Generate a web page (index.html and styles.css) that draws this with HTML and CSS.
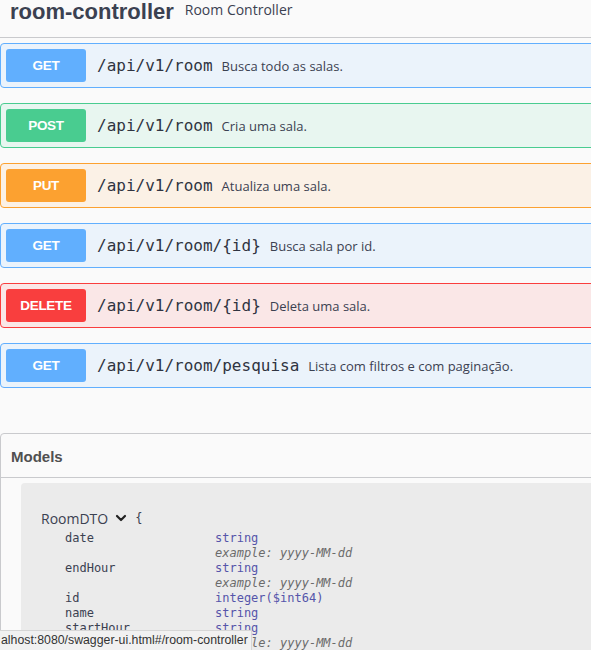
FILE: index.html
```html
<!DOCTYPE html>
<html>
<head>
<meta charset="utf-8">
<link rel="stylesheet" href="styles.css">
</head>
<body>
<div class="wrap">
  <div class="tag-header">
    <h3 class="tag-name">room-controller</h3>
    <span class="tag-desc">Room Controller</span>
  </div>

  <div class="ops">
    <div class="op get"><span class="method">GET</span><span class="path">/api/v1/room</span><span class="summary">Busca todo as salas.</span></div>
    <div class="op post"><span class="method">POST</span><span class="path">/api/v1/room</span><span class="summary">Cria uma sala.</span></div>
    <div class="op put"><span class="method">PUT</span><span class="path">/api/v1/room</span><span class="summary">Atualiza uma sala.</span></div>
    <div class="op get"><span class="method">GET</span><span class="path">/api/v1/room/{id}</span><span class="summary">Busca sala por id.</span></div>
    <div class="op delete"><span class="method">DELETE</span><span class="path">/api/v1/room/{id}</span><span class="summary">Deleta uma sala.</span></div>
    <div class="op get"><span class="method">GET</span><span class="path">/api/v1/room/pesquisa</span><span class="summary">Lista com filtros e com paginação.</span></div>
  </div>

  <section class="models">
    <h4 class="models-title">Models</h4>
    <div class="model-box">
      <div class="model-head">
        <span class="model-name">RoomDTO</span>
        <svg class="chev" width="12" height="12" viewBox="0 0 12 12"><polyline points="2,4 6,8 10,4" fill="none" stroke="#222" stroke-width="2.2" stroke-linecap="round" stroke-linejoin="round"/></svg>
        <span class="brace">{</span>
      </div>
      <div class="props">
        <span class="pname">date</span><span class="ptype">string</span>
        <span></span><span class="pex">example: yyyy-MM-dd</span>
        <span class="pname">endHour</span><span class="ptype">string</span>
        <span></span><span class="pex">example: yyyy-MM-dd</span>
        <span class="pname">id</span><span class="ptype">integer($int64)</span>
        <span class="pname">name</span><span class="ptype">string</span>
        <span class="pname">startHour</span><span class="ptype">string</span>
        <span></span><span class="pex">example: yyyy-MM-dd</span>
      </div>
    </div>
  </section>
</div>
<div class="statusbar">alhost:8080/swagger-ui.html#/room-controller</div>
</body>
</html>
```

FILE: styles.css
```css
html, body {
  margin: 0;
  padding: 0;
}
body {
  background: #fafafa;
  width: 591px;
  height: 650px;
  overflow: hidden;
  color: #3b4151;
  font-family: "Open Sans", sans-serif;
}
.wrap {
  width: 640px;
}
.tag-header {
  height: 37px;
  border-bottom: 1px solid #c9cacd;
  display: flex;
  align-items: flex-start;
  padding-left: 10px;
}
.tag-name {
  margin: 0;
  font-family: "Liberation Sans", Arial, sans-serif;
  font-weight: bold;
  font-size: 22px;
  line-height: 24px;
  color: #3b4151;
}
.tag-desc {
  margin-left: 11px;
  font-size: 14px;
  line-height: 20px;
  color: #3b4151;
}
.ops {
  padding-top: 5px;
  display: flex;
  flex-direction: column;
  gap: 15px;
}
.op {
  height: 45px;
  box-sizing: border-box;
  border: 1px solid;
  border-radius: 4px;
  padding: 5px;
  display: flex;
  align-items: center;
}
.method {
  width: 80px;
  height: 33px;
  flex: none;
  border-radius: 3px;
  color: #fff;
  font-family: "Liberation Sans", Arial, sans-serif;
  font-weight: bold;
  font-size: 13.5px;
  letter-spacing: -0.3px;
  display: flex;
  align-items: center;
  justify-content: center;
}
.path {
  margin-left: 11px;
  font-family: "DejaVu Sans Mono", monospace;
  font-size: 16px;
  color: #2f3441;
}
.summary {
  margin-left: 9px;
  font-size: 13px;
  color: #3b4151;
}
.get { background: #ebf3fb; border-color: #61affe; }
.get .method { background: #61affe; }
.post { background: #e8f6f0; border-color: #49cc90; }
.post .method { background: #49cc90; }
.put { background: #fbf1e6; border-color: #fca130; }
.put .method { background: #fca130; }
.delete { background: #fae7e7; border-color: #f93e3e; }
.delete .method { background: #f93e3e; }

.models {
  margin-top: 45px;
  border: 1px solid #c9cacd;
  border-radius: 4px;
}
.models-title {
  margin: 0;
  height: 44px;
  box-sizing: border-box;
  border-bottom: 1px solid #c9cacd;
  padding-left: 10px;
  padding-top: 2px;
  display: flex;
  align-items: center;
  font-family: "Liberation Sans", Arial, sans-serif;
  font-weight: bold;
  font-size: 15px;
  color: #505050;
}
.model-box {
  margin: 5px 0 0 20px;
  background: #ebebeb;
  border-radius: 4px 0 0 0;
  padding: 25px 20px 40px;
  height: 300px;
}
.model-head {
  display: flex;
  align-items: center;
  height: 20px;
}
.model-name {
  font-size: 14px;
  color: #3b4151;
}
.chev {
  margin-left: 7px;
}
.brace {
  margin-left: 8px;
  font-family: "DejaVu Sans Mono", monospace;
  font-size: 12px;
  color: #3b4151;
}
.props {
  display: grid;
  grid-template-columns: 150px auto;
  padding-left: 24px;
  padding-top: 3px;
  font-family: "DejaVu Sans Mono", monospace;
  font-size: 12px;
  line-height: 15px;
}
.pname { color: #3b4151; }
.ptype { color: #55a; }
.pex { color: #6b6b6b; font-style: italic; }

.statusbar {
  position: fixed;
  left: 0;
  bottom: 0;
  height: 20px;
  box-sizing: border-box;
  padding: 0 3px 0 1px;
  background: #f1f1f1;
  border-top: 1px solid #d6d6d6;
  border-right: 1px solid #d6d6d6;
  font-family: "Liberation Sans", Arial, sans-serif;
  font-size: 12.3px;
  line-height: 19px;
  color: #333;
  white-space: nowrap;
}
```
